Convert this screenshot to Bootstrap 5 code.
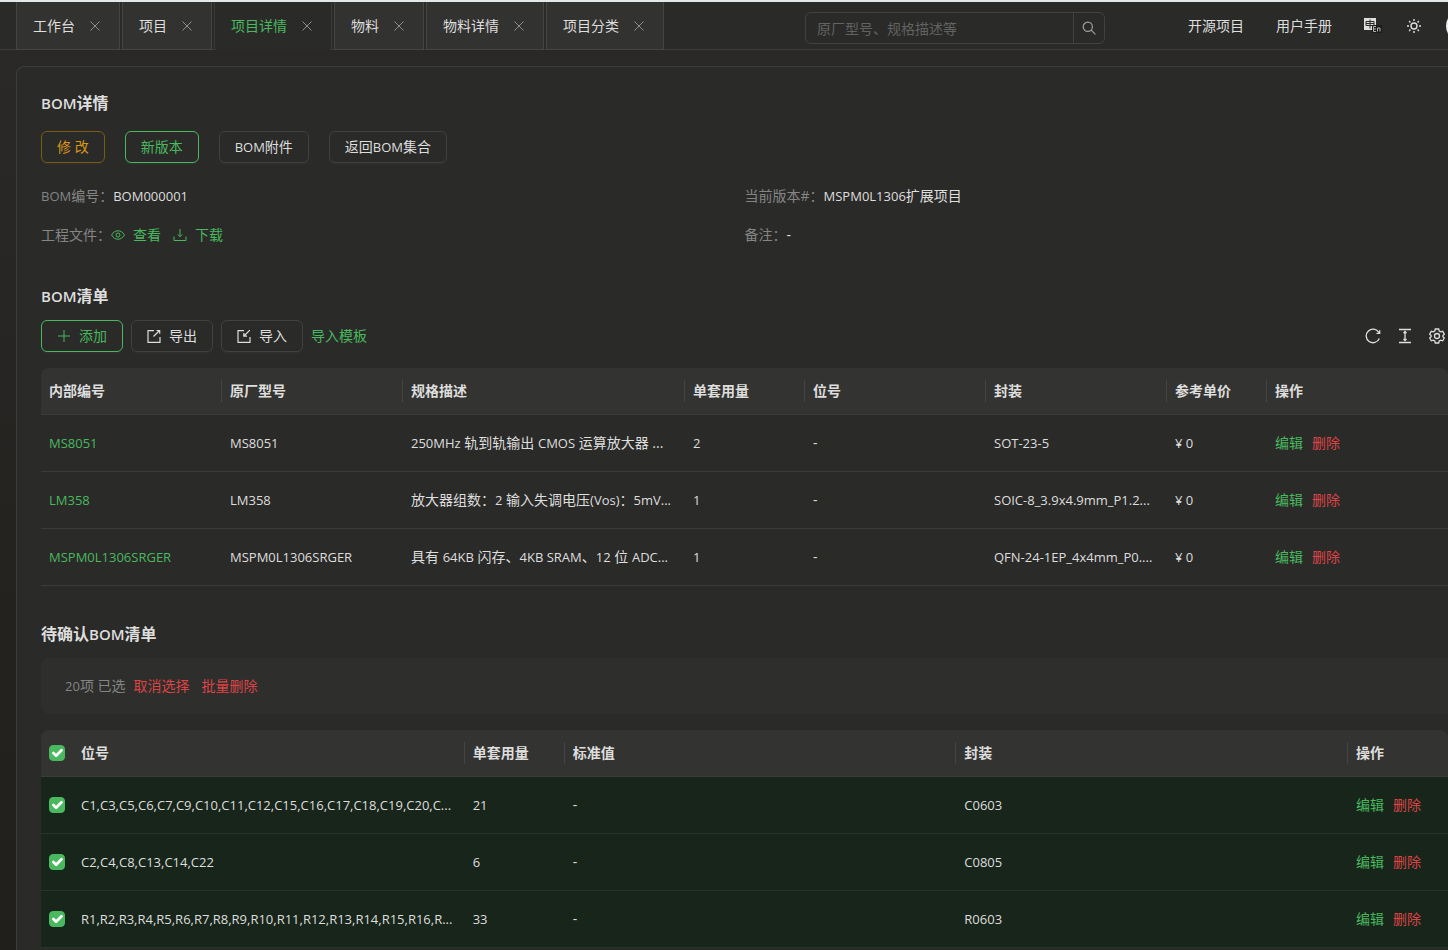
<!DOCTYPE html>
<html lang="zh-CN" data-bs-theme="dark">
<head>
<meta charset="utf-8">
<meta name="viewport" content="width=device-width, initial-scale=1">
<title>BOM详情</title>
<link href="https://cdn.jsdelivr.net/npm/bootstrap@5.3.0/dist/css/bootstrap.min.css" rel="stylesheet">
<style>
:root{--green:#49b85e;--red:#dc4446;--orange:#d89614;--line:#3b3b39;--panel:#2a2a29;--head:#333331;--ink:#dededd;--dim:#858584}
body{font-family:"Open Sans","Noto Sans CJK SC",sans-serif;font-size:14px;line-height:22px;color:var(--ink);background:linear-gradient(#2a2928,#211f1b);overflow:hidden}
svg{display:block;fill:none;stroke:currentColor;flex:none}
.en{font-size:13px}
a{color:var(--green);text-decoration:none}
a:hover{color:#6fd081}
.text-del{color:var(--red)}
.text-dim{color:var(--dim)}
/* top bar */
.topbar{height:50px;border-top:2px solid #e4e8e8;background:var(--panel);border-bottom:1px solid var(--line)}
.page-tabs{gap:2px;height:48px}
.page-tab{height:48px;padding:0 18px 0 16px;gap:14px;background:#323230;border:1px solid #454543;border-top:0}
.page-tab a{color:var(--ink)}
.page-tab.current{background:var(--panel);border-color:var(--line);border-bottom-color:var(--panel);border-radius:0 0 4px 4px}
.page-tab.current a{color:var(--green)}
.tab-close{width:12px;color:#8f8f8e}
.search{width:300px;height:32px;margin:10px 0 0 141px}
.search .form-control,.search .btn{height:32px;font-size:14px;background:transparent;border-color:#424240;border-radius:6px;padding:0 11px;color:var(--ink)}
.search .form-control::placeholder{color:#626261;opacity:1}
.search .btn{width:32px;padding:0 8px;color:#a0a09f}
.topnav{gap:32px}
.topnav a,.topnav .btn{color:var(--ink)}
.topnav .lang{width:18px}
.topnav .theme{margin:0 -8px}
.avatar{width:32px;height:32px;margin-right:-30px;background:#eee}
/* panel */
.panel{margin:16px 0 0 16px;padding:24px 0 0 24px;background:var(--panel);border:1px solid var(--line);border-width:1px 0 0 1px;border-radius:8px 0 0 0}
h2{font-size:16px;line-height:24px;font-weight:600;margin:0;color:var(--ink)}
h2 .en{font-size:15px}
.act{--bs-btn-font-size:14px;--bs-btn-line-height:22px;--bs-btn-padding-y:4px;--bs-btn-padding-x:15px;--bs-btn-border-radius:6px;--bs-btn-color:var(--ink);--bs-btn-border-color:#41413f;--bs-btn-hover-color:var(--green);--bs-btn-hover-border-color:var(--green);display:inline-flex;align-items:center;justify-content:center;gap:8px;height:32px;white-space:nowrap;box-shadow:0 2px 0 rgba(255,255,255,.02)}
.act-green{--bs-btn-color:var(--green);--bs-btn-border-color:var(--green)}
.act-orange{--bs-btn-color:var(--orange);--bs-btn-border-color:#7c5914}
.act-row{gap:20px;margin-top:16px}
.facts{margin:22px 0 38px;row-gap:17px}
.section-gap{margin-top:36px}
.tools{gap:16px;padding-right:3px}
.tools .btn{color:var(--ink);width:16px}
.grid{table-layout:fixed;border-collapse:separate;border-spacing:0;--bs-table-bg:transparent;--bs-table-color:var(--ink);border-color:var(--line)}
.grid th,.grid td{padding:0 8px;vertical-align:middle;white-space:nowrap;overflow:hidden;border-bottom:1px solid var(--line)}
.grid th{height:47px;background:var(--head);font-weight:700;position:relative}
.grid th:first-child{border-top-left-radius:8px}
.grid th:last-child{border-top-right-radius:8px}
.grid td{height:57px}
.grid th.sep::after{content:"";position:absolute;right:0;top:12px;width:1px;height:22px;background:#444442}
.grid .picked td{background:#18251b;border-color:#26352a}
.c-mid{width:120px}.c-price{width:100px}.c-desc{width:282px}.c-check{width:32px}
.ops{gap:9px}
.grid .form-check-input{display:block;width:16px;height:16px;margin:0;border-radius:4px;background-size:18px}
.form-check-input:checked{background-color:var(--green);border-color:var(--green)}
.selected-bar{margin-top:12px;padding:17px 24px;background:#2e2e2c;border-radius:8px 0 0 8px}
</style>
</head>
<body>
<div class="d-flex flex-column vh-100 overflow-hidden">
<header class="topbar d-flex align-items-start flex-shrink-0 ps-3">
  <nav class="page-tabs d-flex text-nowrap" aria-label="页面">
    <div class="page-tab d-flex align-items-center"><a href="#">工作台</a><button class="tab-close btn p-0 border-0" aria-label="关闭"><svg width="12" height="12"><path d="M1.500 1.500l9 9M10.500 1.500l-9 9"/></svg></button></div>
    <div class="page-tab d-flex align-items-center"><a href="#">项目</a><button class="tab-close btn p-0 border-0" aria-label="关闭"><svg width="12" height="12"><path d="M1.500 1.500l9 9M10.500 1.500l-9 9"/></svg></button></div>
    <div class="page-tab current d-flex align-items-center"><a href="#">项目详情</a><button class="tab-close btn p-0 border-0" aria-label="关闭"><svg width="12" height="12"><path d="M1.500 1.500l9 9M10.500 1.500l-9 9"/></svg></button></div>
    <div class="page-tab d-flex align-items-center"><a href="#">物料</a><button class="tab-close btn p-0 border-0" aria-label="关闭"><svg width="12" height="12"><path d="M1.500 1.500l9 9M10.500 1.500l-9 9"/></svg></button></div>
    <div class="page-tab d-flex align-items-center"><a href="#">物料详情</a><button class="tab-close btn p-0 border-0" aria-label="关闭"><svg width="12" height="12"><path d="M1.500 1.500l9 9M10.500 1.500l-9 9"/></svg></button></div>
    <div class="page-tab d-flex align-items-center"><a href="#">项目分类</a><button class="tab-close btn p-0 border-0" aria-label="关闭"><svg width="12" height="12"><path d="M1.500 1.500l9 9M10.500 1.500l-9 9"/></svg></button></div>
  </nav>
  <form class="search input-group flex-nowrap flex-shrink-0">
    <input class="form-control" type="text" placeholder="原厂型号、规格描述等" aria-label="搜索">
    <button class="btn" type="button" aria-label="搜索"><svg width="14" height="14" stroke-width="1.2"><circle cx="5.8" cy="5.8" r="4.6"/><path d="M9.2 9.2L13.4 13.4"/></svg></button>
  </form>
  <nav class="topnav d-flex align-items-center ms-auto h-100 text-nowrap">
    <a href="#">开源项目</a>
    <a href="#">用户手册</a>
    <a href="#" class="lang" aria-label="语言"><svg width="18" height="18" viewBox="0 0 18 18"><path d="M0 1h12v12H0z" fill="#dededd" stroke="none"/><path d="M2 4.500h8v4H2zM6 2.500v9M2 6.500h8" stroke="#2a2a29"/><path d="M8 8h10v8H8z" fill="#1d1d1c" stroke="none"/><path d="M12 9.500H9.500v5H12M9.500 12H12M13.500 14.500v-3.500h2.500v3.500" stroke="#b5b5b4"/></svg></a>
    <button class="theme btn p-0 border-0" aria-label="主题"><svg width="16" height="16" viewBox="0 0 16 16" stroke-width="1.400"><circle cx="8" cy="8" r="3"/><path d="M8 1v2M8 13v2M1 8h2M13 8h2M3.100 3.100l1.300 1.300M11.600 11.600l1.300 1.300M12.900 3.100l-1.300 1.300M4.400 11.600l-1.300 1.300"/></svg></button>
    <span class="avatar rounded-circle"></span>
  </nav>
</header>

<main class="panel flex-grow-1">
  <h2><span class="en">BOM</span>详情</h2>
  <div class="act-row d-flex">
    <button class="btn act act-orange">修 改</button>
    <button class="btn act act-green">新版本</button>
    <button class="btn act"><span><span class="en">BOM</span>附件</span></button>
    <button class="btn act"><span>返回<span class="en">BOM</span>集合</span></button>
  </div>
  <div class="facts row gx-0">
    <div class="col-6"><span class="text-dim"><span class="en">BOM</span>编号：</span><span class="en">BOM000001</span></div>
    <div class="col-6"><span class="text-dim">当前版本#：</span><span class="en">MSPM0L1306</span>扩展项目</div>
    <div class="col-6 d-flex align-items-center"><span class="text-dim">工程文件：</span>
      <a href="#" class="d-inline-flex align-items-center gap-2"><svg width="14" height="14" viewBox="0 0 14 14"><path d="M.6 7C3.500 1.400 10.500 1.400 13.400 7 10.500 12.600 3.500 12.600.6 7z"/><circle cx="7" cy="7" r="2"/></svg>查看</a>
      <a href="#" class="d-inline-flex align-items-center gap-2 ms-2 ps-1"><svg width="14" height="14" viewBox="0 0 14 14"><path d="M7 1v7.500M4.800 6.500L7 8.700l2.200-2.200M1 8.500v4h12v-4"/></svg>下载</a></div>
    <div class="col-6"><span class="text-dim">备注：</span>-</div>
  </div>

  <h2><span class="en">BOM</span>清单</h2>
  <div class="d-flex align-items-center gap-2 mt-2 pt-1 mb-3">
    <button class="btn act act-green"><svg width="14" height="14"><path d="M7 1v12M1 7h12"/></svg>添加</button>
    <button class="btn act"><svg width="14" height="14" viewBox="0 0 14 14" stroke-width="1.200"><path d="M7 1.600H1v11.800h12V8M6.500 7.500L12.500 1.500M9.500 1.500h3.200v3.200"/></svg>导出</button>
    <button class="btn act"><svg width="14" height="14" viewBox="0 0 14 14" stroke-width="1.200"><path d="M7 1.600H1v11.800h12V8M12.800 1.200L7 7M6.800 4v3.200H10"/></svg>导入</button>
    <a href="#">导入模板</a>
    <div class="tools d-flex ms-auto">
      <button class="btn p-0 border-0" aria-label="刷新"><svg width="16" height="16" viewBox="0 0 16 16" stroke-width="1.300"><path d="M14.300 10.500A6.800 6.800 0 1 1 13.900 4.500M14.700 2.200v3.200h-3.200"/></svg></button>
      <button class="btn p-0 border-0" aria-label="密度"><svg width="16" height="16" viewBox="0 0 16 16" stroke-width="1.300"><path d="M2 1.500h12M2 14.500h12M8 4v8M6.500 5L8 3.500 9.500 5M6.500 11L8 12.500 9.500 11"/></svg></button>
      <button class="btn p-0 border-0" aria-label="列设置"><svg width="16" height="16" viewBox="0 0 16 16" stroke-width="1.300"><path d="M6.300 1h3.400l.5 2 1.500.9 2-.6 1.600 2.900L13.900 7.500v1.300l1.400 1.200-1.600 2.800-2-.6-1.500.8-.5 2H6.300l-.5-2-1.500-.8-2 .6L.7 10l1.400-1.200V7.500L.7 6.200l1.600-2.900 2 .6L5.800 3z"/><circle cx="8" cy="8" r="2.500"/></svg></button>
    </div>
  </div>

  <table class="table grid mb-0">
    <colgroup><col><col><col class="c-desc"><col class="c-mid"><col><col><col class="c-price"><col></colgroup>
    <thead><tr><th class="sep">内部编号</th><th class="sep">原厂型号</th><th class="sep">规格描述</th><th class="sep">单套用量</th><th class="sep">位号</th><th class="sep">封装</th><th class="sep">参考单价</th><th>操作</th></tr></thead>
    <tbody>
      <tr><td class="en"><a href="#">MS8051</a></td><td class="en">MS8051</td><td><span class="en">250MHz</span> 轨到轨输出 <span class="en">CMOS</span> 运算放大器 ...</td><td class="en">2</td><td>-</td><td class="en">SOT-23-5</td><td class="en">¥ 0</td><td><div class="ops d-flex"><a href="#">编辑</a><a href="#" class="text-del">删除</a></div></td></tr>
      <tr><td class="en"><a href="#">LM358</a></td><td class="en">LM358</td><td>放大器组数：<span class="en">2</span> 输入失调电压<span class="en">(Vos)</span>：<span class="en">5mV...</span></td><td class="en">1</td><td>-</td><td class="en">SOIC-8_3.9x4.9mm_P1.2...</td><td class="en">¥ 0</td><td><div class="ops d-flex"><a href="#">编辑</a><a href="#" class="text-del">删除</a></div></td></tr>
      <tr><td class="en"><a href="#">MSPM0L1306SRGER</a></td><td class="en">MSPM0L1306SRGER</td><td>具有 <span class="en">64KB</span> 闪存、<span class="en">4KB SRAM</span>、<span class="en">12</span> 位 <span class="en">ADC...</span></td><td class="en">1</td><td>-</td><td class="en">QFN-24-1EP_4x4mm_P0....</td><td class="en">¥ 0</td><td><div class="ops d-flex"><a href="#">编辑</a><a href="#" class="text-del">删除</a></div></td></tr>
    </tbody>
  </table>

  <h2 class="section-gap">待确认<span class="en">BOM</span>清单</h2>
  <div class="selected-bar d-flex mb-3">
    <span class="text-dim"><span class="en">20</span>项 已选</span>
    <a href="#" class="text-del ms-2">取消选择</a>
    <a href="#" class="text-del ms-2 ps-1">批量删除</a>
  </div>
  <table class="table grid mb-0">
    <colgroup><col class="c-check"><col><col class="c-price"><col><col><col class="c-price"></colgroup>
    <thead><tr><th><input class="form-check-input" type="checkbox" checked aria-label="全选"></th><th class="sep">位号</th><th class="sep">单套用量</th><th class="sep">标准值</th><th class="sep">封装</th><th>操作</th></tr></thead>
    <tbody>
      <tr class="picked"><td><input class="form-check-input" type="checkbox" checked aria-label="选择 C1"></td><td class="en">C1,C3,C5,C6,C7,C9,C10,C11,C12,C15,C16,C17,C18,C19,C20,C...</td><td class="en">21</td><td>-</td><td class="en">C0603</td><td><div class="ops d-flex"><a href="#">编辑</a><a href="#" class="text-del">删除</a></div></td></tr>
      <tr class="picked"><td><input class="form-check-input" type="checkbox" checked aria-label="选择 C2"></td><td class="en">C2,C4,C8,C13,C14,C22</td><td class="en">6</td><td>-</td><td class="en">C0805</td><td><div class="ops d-flex"><a href="#">编辑</a><a href="#" class="text-del">删除</a></div></td></tr>
      <tr class="picked"><td><input class="form-check-input" type="checkbox" checked aria-label="选择 R1"></td><td class="en">R1,R2,R3,R4,R5,R6,R7,R8,R9,R10,R11,R12,R13,R14,R15,R16,R...</td><td class="en">33</td><td>-</td><td class="en">R0603</td><td><div class="ops d-flex"><a href="#">编辑</a><a href="#" class="text-del">删除</a></div></td></tr>
    </tbody>
  </table>
</main>
</div>
<script src="https://cdn.jsdelivr.net/npm/bootstrap@5.3.0/dist/js/bootstrap.bundle.min.js"></script>
</body>
</html>
